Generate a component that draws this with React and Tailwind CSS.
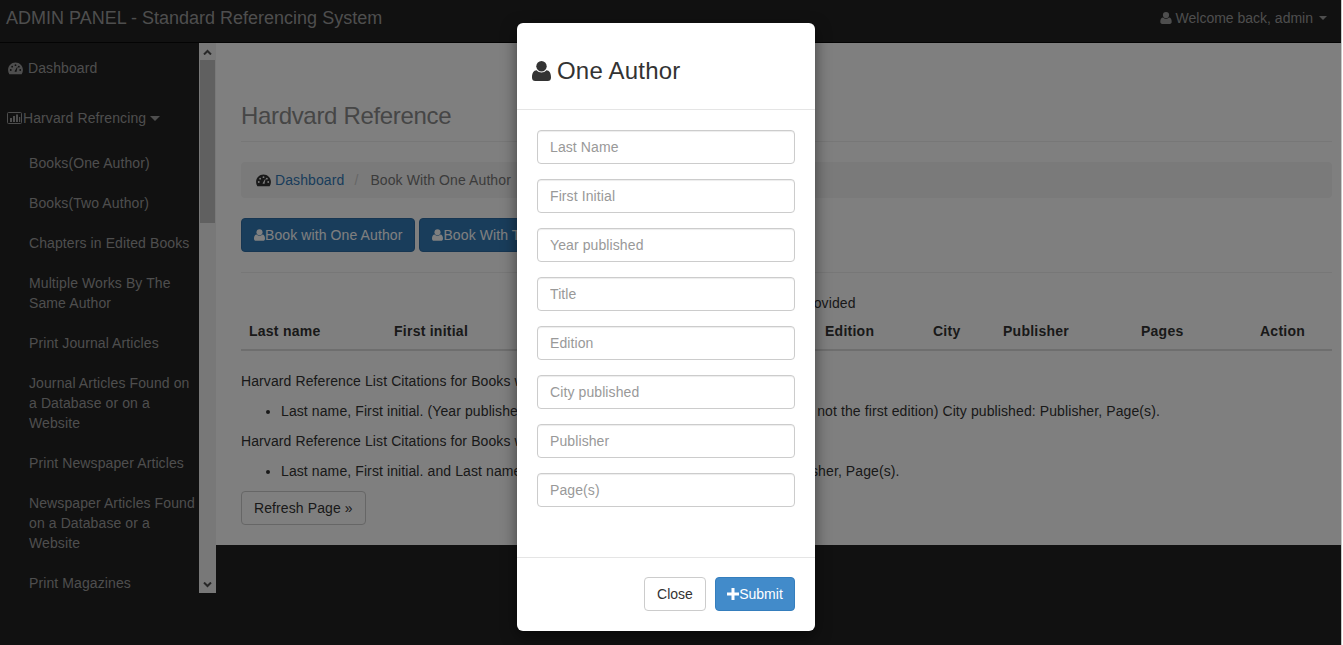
const subLinks = [
  "Books(One Author)",
  "Books(Two Author)",
  "Chapters in Edited Books",
  "Multiple Works By The Same Author",
  "Print Journal Articles",
  "Journal Articles Found on a Database or on a Website",
  "Print Newspaper Articles",
  "Newspaper Articles Found on a Database or a Website",
  "Print Magazines",
]

const fields = ["Last Name", "First Initial", "Year published", "Title", "Edition", "City published", "Publisher", "Page(s)"]

const columns = [
  ["Last name", "w-[145px]"],
  ["First initial", "w-[145px]"],
  ["Year published", "w-[150px]"],
  ["Title", "w-[136px]"],
  ["Edition", "w-[108px]"],
  ["City", "w-[70px]"],
  ["Publisher", "w-[138px]"],
  ["Pages", "w-[119px]"],
  ["Action", "w-[80px]"],
]

function UserIcon({ className }) {
  return (
    <svg viewBox="0 0 19 20" className={className} fill="currentColor">
      <circle cx="9.5" cy="5.2" r="5.2" />
      <path d="M0 16.4C0 12.2 1.6 9.3 4.6 9.3 6 10.7 7.6 11.5 9.5 11.5 11.4 11.5 13 10.7 14.4 9.3 17.4 9.3 19 12.2 19 16.4 19 18.6 17.7 20 15.8 20L3.2 20C1.3 20 0 18.6 0 16.4Z" />
    </svg>
  )
}

function GaugeIcon({ className }) {
  const dot = (x, y) => `M${x - 1} ${y}a1 1 0 1 0 2 0a1 1 0 1 0 -2 0Z`
  const holes = [dot(2.9, 8.6), dot(4.4, 5), dot(8, 3.4), dot(11.6, 5), dot(13.1, 8.6)].join("")
  return (
    <svg viewBox="0 0 16 14" className={className} fill="currentColor">
      <path
        fillRule="evenodd"
        d={`M8 .5C12.4 .5 16 4.1 16 8.5 16 10.2 15.5 11.8 14.6 13.2L1.4 13.2C.5 11.8 0 10.2 0 8.5 0 4.1 3.6 .5 8 .5Z${holes}M6.9 10.2L9.9 5.2 10.2 5.4 9 10.8 6.9 10.2Z`}
      />
    </svg>
  )
}

function ChartIcon({ className }) {
  return (
    <svg viewBox="0 0 15 12" className={className} fill="currentColor">
      <rect x=".5" y=".5" width="14" height="11" rx="1" fill="none" stroke="currentColor" />
      <rect x="3" y="6" width="2" height="4" />
      <rect x="6" y="4" width="2" height="6" />
      <rect x="9" y="2.5" width="2" height="7.5" />
      <rect x="12" y="5" width="1.2" height="5" />
    </svg>
  )
}

function Chevron({ up }) {
  return (
    <svg viewBox="0 0 9 6" className="w-[9px] h-[6px] text-[#505050]" fill="none" stroke="currentColor" strokeWidth="2">
      <path d={up ? "M1 5.5L4.5 2 8 5.5" : "M1 .5L4.5 4 8 .5"} />
    </svg>
  )
}

function Caret({ className }) {
  return <span className={`inline-block w-0 h-0 border-x-[4px] border-t-[4px] border-x-transparent ${className}`} />
}

function Sidebar() {
  return (
    <aside className="flex items-start w-[216px] shrink-0">
      <nav className="w-[199px] h-[550px] overflow-hidden text-[#9d9d9d]">
        <div className="flex items-center h-[50px] pl-[8px]">
          <GaugeIcon className="w-[15px] h-[13px] mr-[5px]" />
          Dashboard
        </div>
        <div className="flex items-center h-[50px] pl-[7px]">
          <ChartIcon className="w-[15px] h-[12px] mr-[1px]" />
          Harvard Refrencing
          <Caret className="ml-[4px] border-x-[5px] border-t-[5px] border-t-[#9d9d9d]" />
        </div>
        <ul>
          {subLinks.map(item => (
            <li key={item} className="py-[10px] pl-[29px] pr-[4px]">{item}</li>
          ))}
        </ul>
      </nav>
      {/* scrollbar */}
      <div className="flex flex-col items-center w-[17px] h-[550px] bg-[#f1f1f1]">
        <div className="flex items-center justify-center h-[17px]"><Chevron up /></div>
        <div className="w-[15px] h-[163px] bg-[#c1c1c1]" />
        <div className="flex-1" />
        <div className="flex items-center justify-center h-[17px]"><Chevron /></div>
      </div>
    </aside>
  )
}

function MainContent() {
  return (
    <main className="flex-1 self-start bg-white pl-[25px] pr-[9px] pb-[20px] text-[#333]">
      <div className="mt-[60px] pb-[12px] mb-[20px] border-b border-[#eee]">
        <h1 className="text-[24px] leading-[26px] tracking-[-0.33px] text-[#8c8c8c]">Hardvard Reference</h1>
      </div>

      <div className="flex items-center h-[36px] px-[15px] rounded bg-[#f5f5f5]">
        <GaugeIcon className="w-[15px] h-[13px] mr-[4px] text-[#333]" />
        <span className="text-[#337ab7]">Dashboard</span>
        <span className="pl-[10px] pr-[12px] text-[#ccc]">/</span>
        <span className="text-[#777]">Book With One Author</span>
      </div>

      <div className="flex gap-[4px] mt-[20px]">
        <button className="flex items-center h-[34px] px-[12px] rounded border border-[#2e6da4] bg-[#337ab7] text-white">
          <UserIcon className="w-[11px] h-[12px]" />Book with One Author
        </button>
        <button className="flex items-center h-[34px] px-[12px] rounded border border-[#2e6da4] bg-[#337ab7] text-white">
          <UserIcon className="w-[11px] h-[12px]" />Book With Two Author
        </button>
      </div>

      <hr className="mt-[20px] mb-[20px] border-[#eee]" />

      <table className="w-[1091px] table-fixed">
        <caption className="text-center pr-[12px]">The data to be provided</caption>
        <thead>
          <tr className="border-b-2 border-[#ddd]">
            {columns.map(([name, width]) => (
              <th key={name} className={`p-[8px] text-left font-bold tracking-[0.25px] ${width}`}>{name}</th>
            ))}
          </tr>
        </thead>
      </table>

      <p className="mt-[20px] mb-[10px]">Harvard Reference List Citations for Books with One Author</p>
      <ul className="list-disc pl-[40px] mb-[10px]">
        <li>Last name, First initial. (Year published) Title of book. Edition number. (only include if not the first edition) City published: Publisher, Page(s).</li>
      </ul>
      <p className="mb-[10px]">Harvard Reference List Citations for Books with Two Authors</p>
      <ul className="list-disc pl-[40px] mb-[10px]">
        <li>Last name, First initial. and Last name, First initial. (Year). Title. City published: Publisher, Page(s).</li>
      </ul>
      <button className="h-[34px] px-[12px] rounded border border-[#ccc] bg-white">Refresh Page »</button>
    </main>
  )
}

function AuthorModal() {
  return (
    <div className="absolute left-[517px] top-[23px] w-[298px] rounded-md bg-white text-[#333] shadow-[0_5px_15px_rgba(0,0,0,0.5)]">
      <div className="flex items-center pt-[35px] pb-[25px] px-[15px] border-b border-[#e5e5e5]">
        <UserIcon className="w-[19px] h-[20px] mr-[6px] mt-[-1px]" />
        <h3 className="text-[24px] leading-[26px] tracking-[0.2px]">One Author</h3>
      </div>
      <div className="flex flex-col gap-[15px] pt-[20px] pb-[50px] px-[20px]">
        {fields.map(f => (
          <input
            key={f}
            placeholder={f}
            className="h-[34px] w-full px-[12px] rounded border border-[#ccc] bg-white placeholder-[#999] shadow-[inset_0_1px_1px_rgba(0,0,0,0.075)]"
          />
        ))}
      </div>
      <div className="flex justify-end gap-[9px] pt-[19px] pb-[20px] px-[20px] border-t border-[#e5e5e5] tracking-normal">
        <button className="h-[34px] w-[62px] rounded border border-[#ccc] bg-white">Close</button>
        <button className="flex items-center justify-center h-[34px] w-[80px] rounded border border-[#357ebd] bg-[#428bca] text-white">
          <svg viewBox="0 0 12 12" className="w-[12px] h-[12px]" fill="currentColor">
            <path d="M4.5 0H7.5V4.5H12V7.5H7.5V12H4.5V7.5H0V4.5H4.5Z" />
          </svg>
          Submit
        </button>
      </div>
    </div>
  )
}

export default function App() {
  return (
    <div className="flex w-[1343px] h-[645px] overflow-hidden bg-white text-sm leading-5 tracking-[0.1px] [font-family:'Liberation_Sans',Arial,sans-serif]">
      <div className="relative flex flex-col w-[1341px] bg-[#222]">
        <header className="flex items-center justify-between shrink-0 h-[43px] pb-[6px] pl-[6px] pr-[14px] border-b border-[#080808] text-[#9d9d9d] tracking-normal">
          <span className="text-[18px]">ADMIN PANEL - Standard Referencing System</span>
          <span className="flex items-center">
            <UserIcon className="w-[12px] h-[12px] mr-[4px]" />
            Welcome back, admin
            <Caret className="ml-[6px] border-t-[#9d9d9d]" />
          </span>
        </header>
        <div className="flex flex-1 items-start">
          <Sidebar />
          <MainContent />
        </div>
        <div className="absolute inset-0 bg-black/50">
          <AuthorModal />
        </div>
      </div>
      <div className="w-[2px] border-l border-[#c8c8c8] bg-white" />
    </div>
  )
}
